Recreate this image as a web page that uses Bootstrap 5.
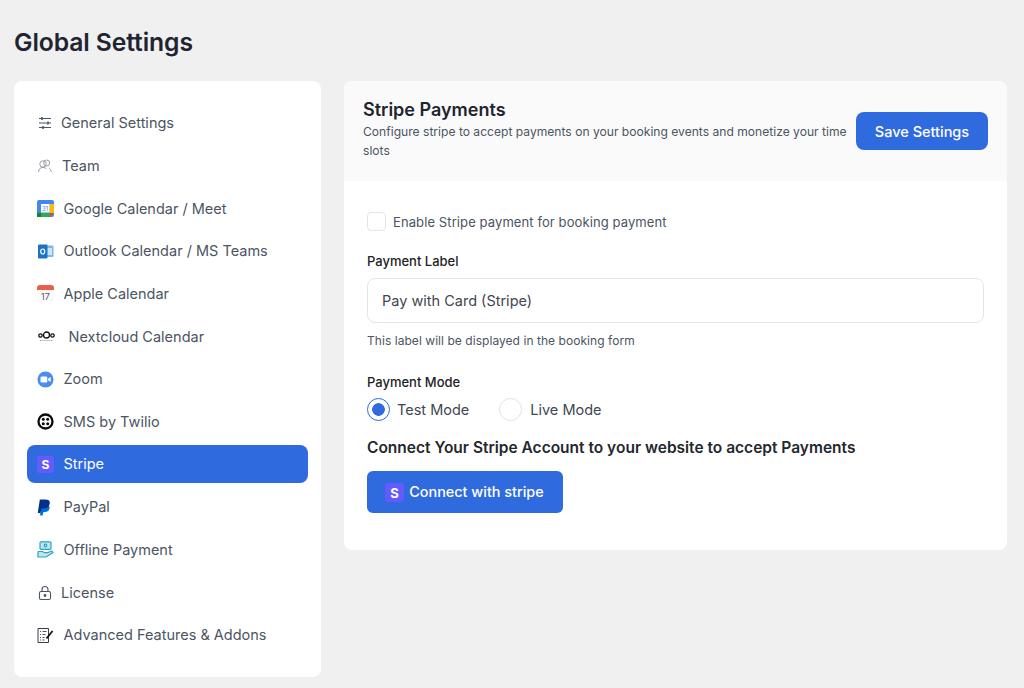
<!DOCTYPE html>
<html lang="en">
<head>
<meta charset="utf-8">
<title>Global Settings</title>
<link href="https://cdn.jsdelivr.net/npm/bootstrap@5.3.0/dist/css/bootstrap.min.css" rel="stylesheet">
<style>
html,body{height:688px;overflow:hidden}
body{background:#f0f0f0;font-family:Inter,"Liberation Sans",sans-serif;color:#1d2327}
.shell{padding:28px 17px 0 14px}
.page-title{font-size:24.7px;font-weight:600;line-height:29px;margin:0 0 24px;color:#1e2530;letter-spacing:-.1px}
.side{width:307px;height:596px;flex:none;border-radius:8px;padding:23.2px 13px 0}
.side-link{height:38px;margin-bottom:4.68px;padding:0 0 0 10px;border-radius:8px;font-size:14.5px;color:#4b5563;display:flex;align-items:center;white-space:nowrap;text-decoration:none}
.side-link:hover{color:#4b5563}
.side-link.on{background:#2f6bdf;color:#fff;margin-top:-1px;margin-bottom:5.68px;padding-top:1px}
.side-link.on:hover{color:#fff}
.ic{flex:none;display:block;width:16px;height:16px;margin-right:8px}
.ic-team{margin-right:9px}
.ic-lg{width:17px;height:17px;margin-right:9.5px}
.ic-nc{width:17px;height:17px;margin-right:13.5px;margin-left:1px}
.main-card{width:663px;height:469px;margin-left:23px;border-radius:8px;overflow:hidden}
.main-head{height:100px;background:#fafafa;padding:18px 19px 0 19px}
.main-head h2{font-size:18px;font-weight:600;line-height:22px;margin:0 0 1px;color:#1e2530}
.main-head p{font-size:12.1px;line-height:19px;margin:0;color:#4b5563}
.save-btn{width:132px;height:38px;flex:none;margin-left:3px;margin-top:13px;background:#2f6bdf;border:0;border-radius:8px;font-size:14.5px;font-weight:500;color:#fff;padding:1px 0 0}
.main-body{padding:31px 23px 0}
.chk-row{display:flex;align-items:center;height:19px;margin-bottom:22px}
.chk-box{width:19px;height:19px;border:1px solid #e2e5e9;border-radius:4px;background:#fff;margin:0 7px 0 0;flex:none;appearance:none}
.chk-row label{font-size:13px;color:#4b5563;letter-spacing:.1px;padding-top:2px}
.fld-label{display:block;font-size:13px;font-weight:500;line-height:16px;color:#1d2327;margin:0 0 9px}
.fld-input{height:45px;border:1px solid #e2e5e9;border-radius:8px;font-size:14.5px;padding:0 14px;color:#3f4752}
.hint{font-size:12px;line-height:16px;color:#4b5563;margin:10px 0 25px;letter-spacing:.05px}
.radio-row{display:flex;align-items:center;height:23px;margin:-1px 0 0}
.rad{width:23px;height:23px;border-radius:50%;border:1px solid #dfe2e6;background:#fff;flex:none;margin-right:7px;appearance:none}
.rad:checked{border:1.5px solid #2f6bdf;background:radial-gradient(circle,#2f6bdf 0 6px,#fff 6.6px)}
.rad-live{margin-right:8px}
.radio-row label{font-size:14.5px;color:#3f4752;margin-right:30px;padding-top:1px}
.connect-h{font-size:15.5px;font-weight:600;line-height:20px;margin:17px 0 13px;color:#23282d}
.connect-btn{width:196px;height:42px;background:#2f6bdf;border:0;border-radius:6px;color:#fff;font-size:14.4px;font-weight:500;display:flex;align-items:center;justify-content:center;padding:0;gap:5px}
.connect-btn svg{width:19px;height:19px;margin-left:-1px}
</style>
</head>
<body>
<div class="shell">
<h1 class="page-title">Global Settings</h1>
<div class="d-flex align-items-start">
<nav class="side bg-white nav flex-column flex-nowrap d-block">
<a class="side-link" href="#"><svg class="ic" viewBox="0 0 16 16" fill="none" stroke="#4b5563" stroke-width="1.100"><path d="M2 3.500h12M2 8h12M2 12.500h12"/><path d="M5 2v3M11 6.500v3M6 11v3" stroke-width="1.600"/></svg><span>General Settings</span></a>
<a class="side-link" href="#"><svg class="ic ic-team" viewBox="0 0 16 16" fill="none" stroke="#8d939c" stroke-width=".9"><circle cx="6" cy="6" r="3.200"/><circle cx="9.700" cy="5" r="3"/><path d="M1.500 14c.3-3 2-4.700 4.500-4.700 1.500 0 2.800.7 3.500 2M12 10c1.300.6 2 2 2.200 3.800"/></svg><span>Team</span></a>
<a class="side-link" href="#"><svg class="ic-lg ic" viewBox="0 0 17 17"><rect width="17" height="17" rx="2" fill="#4285f4"/><rect x="12.500" y="4" width="4.500" height="9" fill="#fbbc04"/><rect y="12.500" width="13" height="4.500" fill="#34a853"/><rect y="13" x="0" width="4" height="4" fill="#188038"/><path d="M13 13h4l-4 4z" fill="#ea4335"/><rect x="4" y="4" width="8.500" height="8.500" fill="#fff"/><text x="8.200" y="10.500" font-size="6" text-anchor="middle" fill="#4285f4" font-family="Inter">31</text></svg>Google Calendar / Meet</a>
<a class="side-link" href="#"><svg class="ic-lg ic" viewBox="0 0 17 17"><rect x="6" y="2.500" width="10.500" height="11.500" rx="1" fill="#7db6ec"/><rect x="10" y="5" width="5" height="7" fill="#cfe3f7"/><rect x="1" y="1.500" width="9.500" height="14" rx="1" fill="#1a73c9"/><ellipse cx="5.700" cy="8.500" rx="2" ry="2.500" fill="none" stroke="#fff" stroke-width="1.200"/></svg>Outlook Calendar / MS Teams</a>
<a class="side-link" href="#"><svg class="ic-lg ic" viewBox="0 0 17 17"><rect width="17" height="17" rx="2" fill="#fafafa"/><path d="M0 5V3a3 3 0 0 1 3-3h11a3 3 0 0 1 3 3v2z" fill="#e8604c"/><text x="8.500" y="14.800" font-size="9" text-anchor="middle" fill="#555b63" font-family="Inter">17</text></svg>Apple Calendar</a>
<a class="side-link" href="#"><svg class="ic-nc ic" viewBox="0 0 17 17" fill="none" stroke="#111" stroke-width="1.300"><circle cx="2.500" cy="7.500" r="1.700"/><circle cx="8.500" cy="7" r="3"/><circle cx="14.500" cy="7.500" r="1.700"/><path d="M2 12.500h13" stroke="#aaa" stroke-width=".9" stroke-dasharray="1.500 .6"/></svg>Nextcloud Calendar</a>
<a class="side-link" href="#"><svg class="ic-lg ic" viewBox="0 0 17 17"><circle cx="8.500" cy="8.500" r="8" fill="#4a8cf0"/><rect x="3.500" y="5.500" width="6.800" height="6" rx="1.300" fill="#fff"/><path d="M11 7.800l2.700-1.900v5.200L11 9.200z" fill="#fff"/></svg>Zoom</a>
<a class="side-link" href="#"><svg class="ic-lg ic" viewBox="0 0 17 17"><circle cx="8.500" cy="8.500" r="7" fill="#fff" stroke="#0b0b0b" stroke-width="2.300"/><circle cx="6.300" cy="6.300" r="1.500" fill="#0b0b0b"/><circle cx="10.700" cy="6.300" r="1.500" fill="#0b0b0b"/><circle cx="6.300" cy="10.700" r="1.500" fill="#0b0b0b"/><circle cx="10.700" cy="10.700" r="1.500" fill="#0b0b0b"/></svg>SMS by Twilio</a>
<a class="side-link on" href="#"><svg class="ic-lg ic" viewBox="0 0 17 17"><rect width="17" height="17" rx="2" fill="#635bff"/><text x="8.500" y="13" font-size="12" font-weight="700" text-anchor="middle" fill="#fff" font-family="Inter">S</text></svg>Stripe</a>
<a class="side-link" href="#"><svg class="ic-lg ic" viewBox="0 0 17 17"><path d="M5.500 16.500H3L4.500 6l4-.5c3 0 4.500 1.500 4 4-.5 2.300-2 3.500-4.500 3.500H6.500z" fill="#0070e0"/><path d="M3.500 14H.8L2.800 .5H8.300c3.700 0 5 1.700 4.300 4.500-.7 3-2.800 4.500-6 4.500H4.500z" fill="#003087"/></svg>PayPal</a>
<a class="side-link" href="#"><svg class="ic-lg ic" viewBox="0 0 17 17" fill="none" stroke="#2aa7c4" stroke-width="1.200"><rect x="3" y=".8" width="11" height="7.500" rx="1" fill="#bfe6ef"/><circle cx="8.500" cy="4.500" r="1.300"/><path d="M1 10.500h4.500l2 1.200h3M1 10.500V16h8l7-4.500-1.200-1.500-4.300 1.700" fill="#bfe6ef"/></svg>Offline Payment</a>
<a class="side-link" href="#"><svg class="ic" viewBox="0 0 16 16" fill="none" stroke="#4b5563" stroke-width="1.100"><rect x="2.500" y="6.500" width="11" height="8" rx="1.500"/><path d="M5 6.500V4.500a3 3 0 0 1 6 0v2"/><circle cx="8" cy="10.500" r=".9" fill="#4b5563"/></svg><span>License</span></a>
<a class="side-link" href="#"><svg class="ic-lg ic" viewBox="0 0 17 17" fill="none" stroke="#3a3f46" stroke-width="1"><path d="M1 1.500h10.500v14H1z"/><path d="M3 4.500h1M5.500 4.500h4M3 7.500h1M5.500 7.500h3M3 10.500h1M5.500 10.500h2M3 13h1M5.500 13h2" stroke-width=".9"/><path d="M15.500 4l-6 7.500" stroke="#111" stroke-width="1.800"/></svg>Advanced Features &amp; Addons</a>
</nav>
<main class="main-card bg-white">
<div class="main-head d-flex align-items-start">
<div class="flex-grow-1">
<h2>Stripe Payments</h2>
<p>Configure stripe to accept payments on your booking events and monetize your time slots</p>
</div>
<button class="btn save-btn" type="button">Save Settings</button>
</div>
<div class="main-body">
<div class="chk-row"><input class="chk-box" type="checkbox" id="en"><label for="en">Enable Stripe payment for booking payment</label></div>
<label class="fld-label" for="pl">Payment Label</label>
<input class="form-control fld-input" id="pl" value="Pay with Card (Stripe)">
<p class="hint">This label will be displayed in the booking form</p>
<label class="fld-label">Payment Mode</label>
<div class="radio-row">
<input class="rad" type="radio" name="m" id="t" checked><label for="t">Test Mode</label>
<input class="rad rad-live" type="radio" name="m" id="l"><label for="l">Live Mode</label>
</div>
<p class="connect-h">Connect Your Stripe Account to your website to accept Payments</p>
<button class="btn connect-btn" type="button"><svg viewBox="0 0 19 19"><rect width="19" height="19" rx="3" fill="#635bff"/><text x="9.500" y="14.500" font-size="13" font-weight="700" text-anchor="middle" fill="#fff" font-family="Inter">S</text></svg>Connect with stripe</button>
</div>
</main>
</div>
</div>
<script src="https://cdn.jsdelivr.net/npm/bootstrap@5.3.0/dist/js/bootstrap.bundle.min.js"></script>
</body>
</html>
